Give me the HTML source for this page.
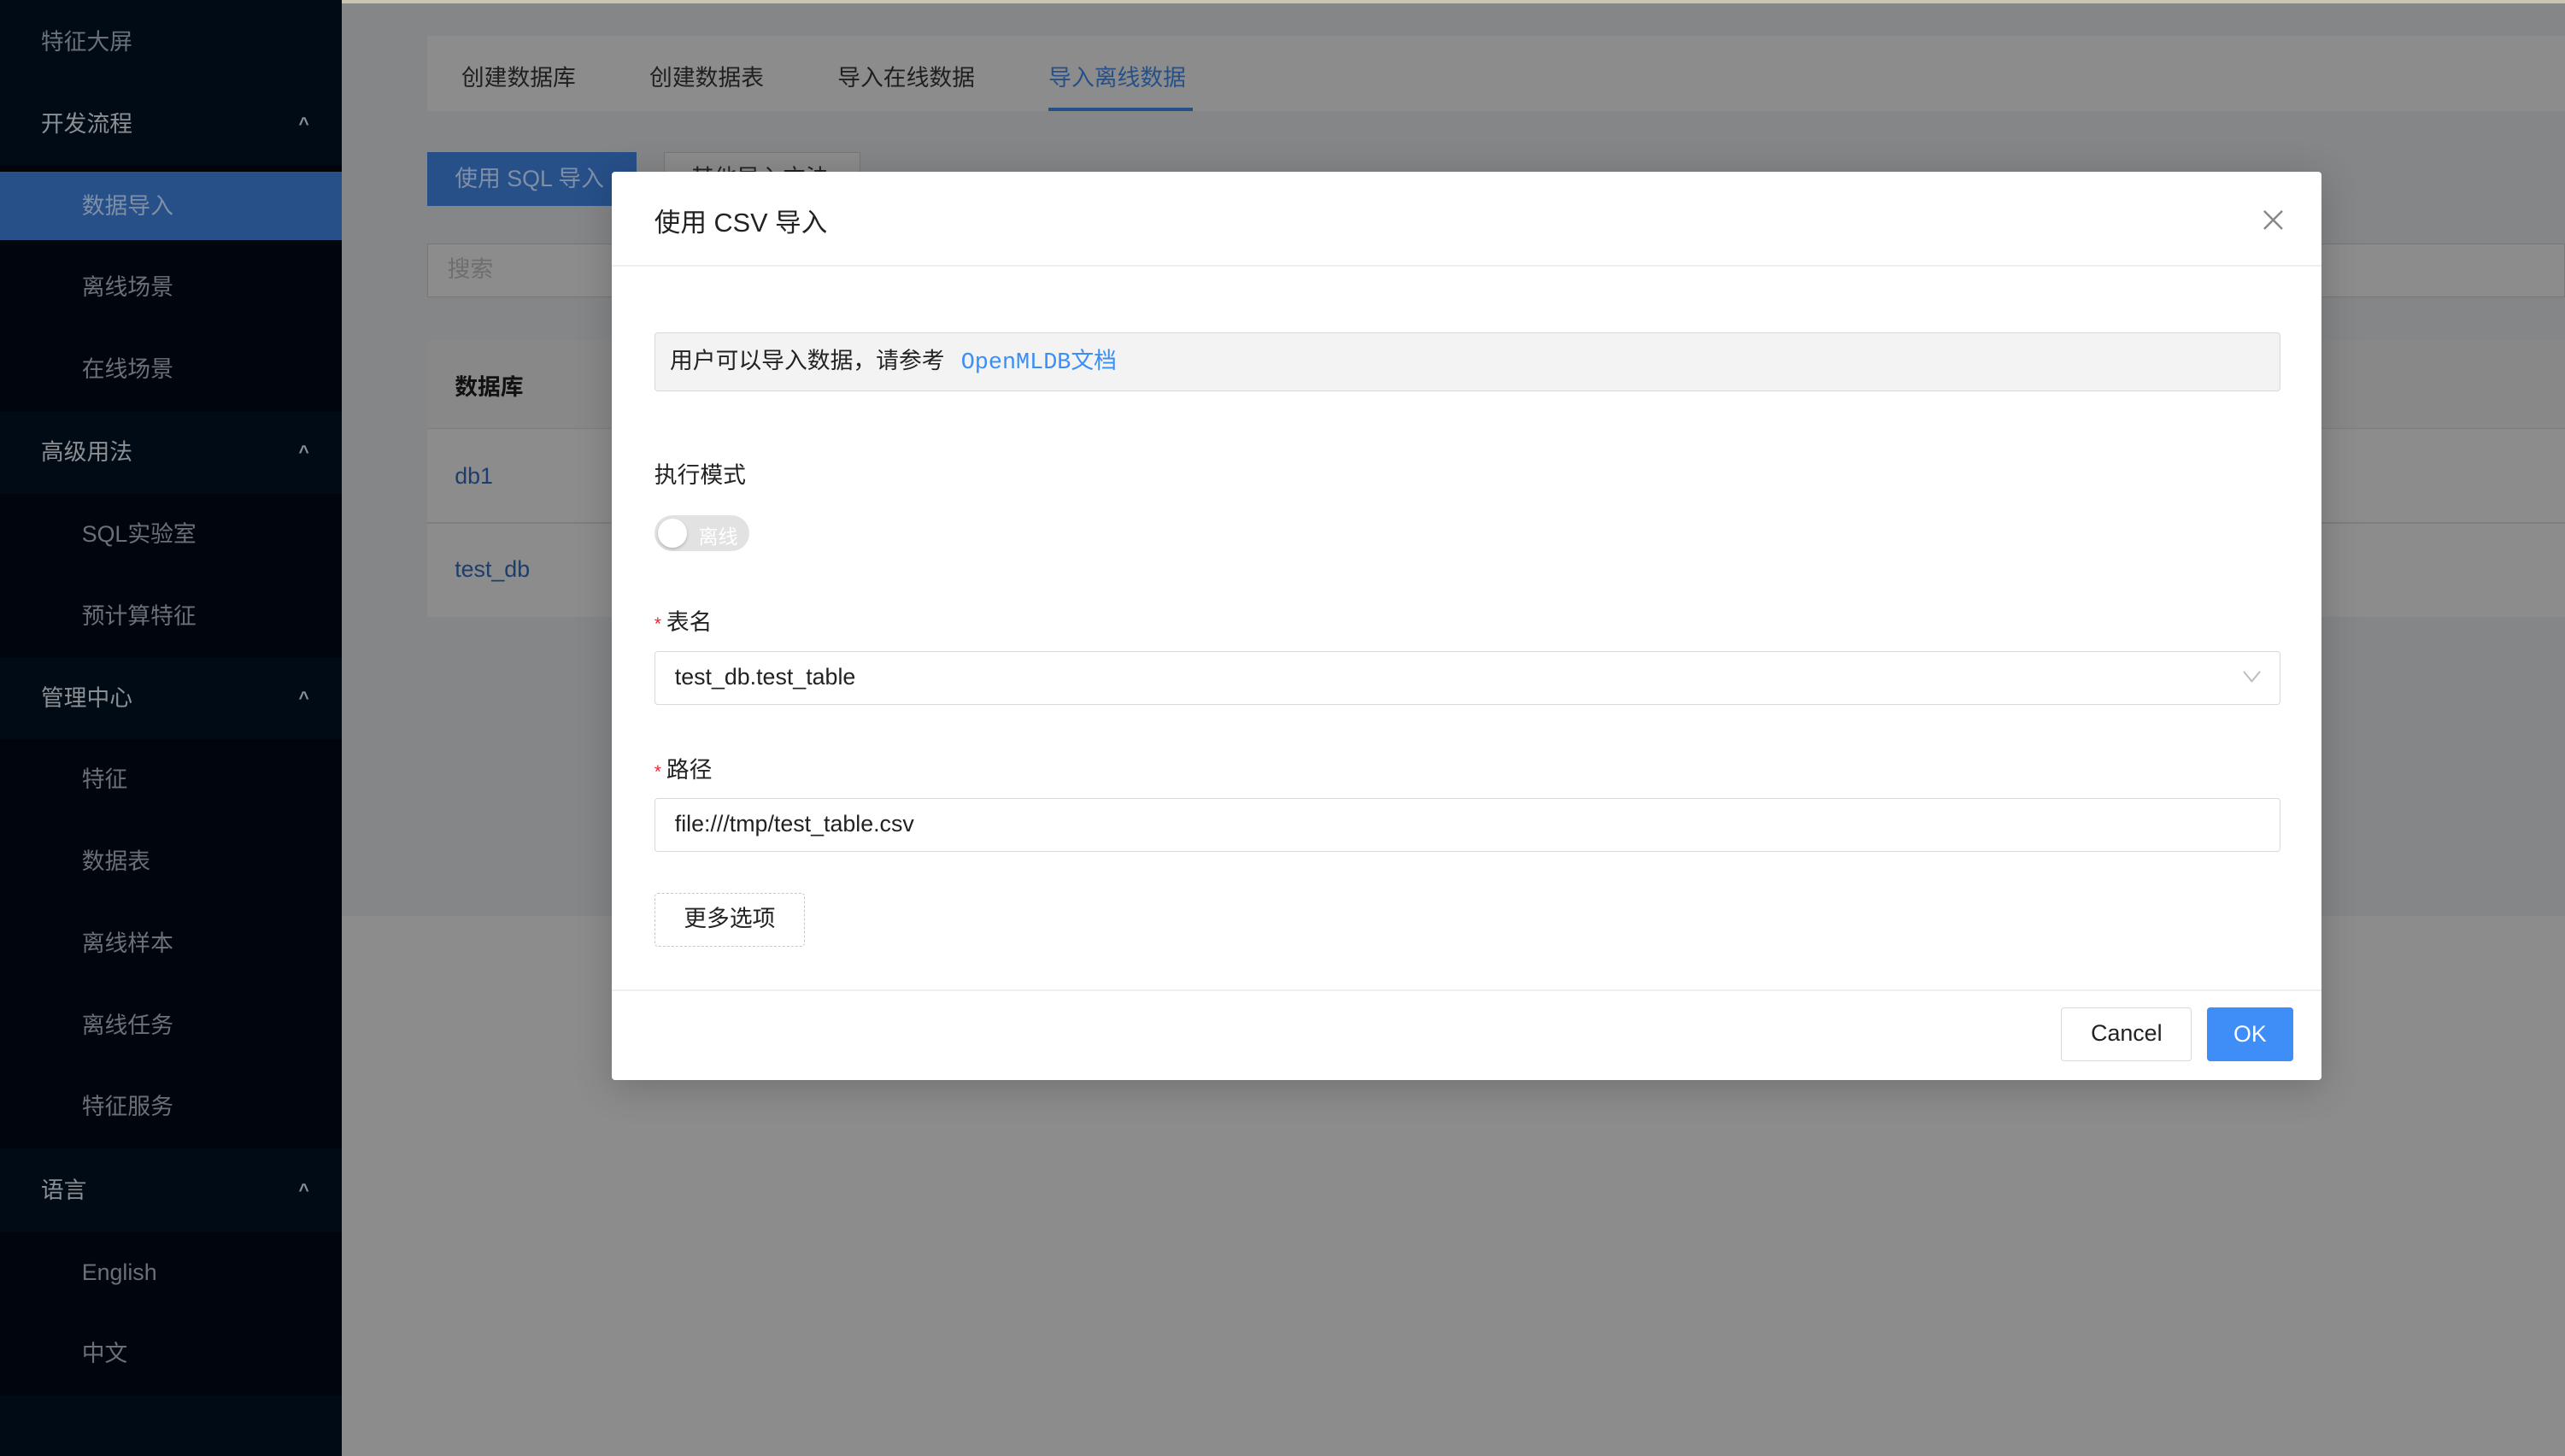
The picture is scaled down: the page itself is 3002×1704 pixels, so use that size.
<!DOCTYPE html>
<html><head><meta charset="utf-8"><style>
*{margin:0;padding:0;box-sizing:border-box}
html,body{width:3002px;height:1704px;overflow:hidden;background:#8c8c8c}
#root{zoom:1.9145;width:1568px;height:890px;position:relative;font-family:"Liberation Sans","Noto Sans CJK SC",sans-serif;font-size:14px}
.abs{position:absolute}
.side{left:0;top:0;width:209px;height:890px;background:#000b16}
.it{position:absolute;left:0;width:209px;height:50px;line-height:50px;color:#6b7077;font-size:14px}
.h{padding-left:25px;color:#8c8f93;background:#000b16}
.s{padding-left:50px;background:#00060c}
.car{position:absolute;right:20px;top:0;font-size:11px;font-weight:bold;color:#8c8f93}
</style></head><body><div id="root">
<div class="abs" style="left:0;top:0;width:1568px;height:2px;background:#c9c4b2"></div>
<div class="abs side">
<div class="it h" style="top:1px;color:#6b7077">特征大屏</div>
<div class="it h" style="top:51px">开发流程<span class="car">^</span></div>
<div class="abs" style="top:101px;left:0;width:209px;height:302px;background:#00060c"></div>
<div class="it" style="top:105px;height:42px;line-height:42px;padding-left:50px;background:#275089;color:#7e8fa6">数据导入</div>
<div class="it s" style="top:151px">离线场景</div>
<div class="it s" style="top:201px">在线场景</div>
<div class="it h" style="top:252px">高级用法<span class="car">^</span></div>
<div class="it s" style="top:302px">SQL实验室</div>
<div class="it s" style="top:352px">预计算特征</div>
<div class="it h" style="top:402px">管理中心<span class="car">^</span></div>
<div class="it s" style="top:452px">特征</div>
<div class="it s" style="top:502px">数据表</div>
<div class="it s" style="top:552px">离线样本</div>
<div class="it s" style="top:602px">离线任务</div>
<div class="it s" style="top:652px">特征服务</div>
<div class="it h" style="top:703px">语言<span class="car">^</span></div>
<div class="it s" style="top:753px">English</div>
<div class="it s" style="top:803px">中文</div>
</div>
<div class="abs" style="left:209px;top:2px;width:1359px;height:558px;background:#858688"></div>
<div class="abs" style="left:261px;top:22px;width:1307px;height:46px;background:#8c8c8c;font-size:14px;color:#1f1f1f">
<span class="abs" style="left:21px;top:14px">创建数据库</span>
<span class="abs" style="left:136px;top:14px">创建数据表</span>
<span class="abs" style="left:251px;top:14px">导入在线数据</span>
<span class="abs" style="left:380px;top:14px;color:#275089">导入离线数据</span>
<div class="abs" style="left:380px;top:44px;width:88px;height:2px;background:#275089"></div>
</div>
<div class="abs" style="left:261px;top:93px;width:128px;height:33px;background:#275089;color:#7e8fa6;line-height:33px;padding-left:17px;font-size:14px">使用 SQL 导入</div>
<div class="abs" style="left:406px;top:93px;width:120px;height:33px;border:1px solid #777;background:#8c8c8c;color:#222;line-height:31px;padding-left:16px">其他导入方法</div>
<div class="abs" style="left:261px;top:149px;width:1307px;height:33px;border:1px solid #777;background:#8c8c8c;color:#6e6e6e;line-height:31px;padding-left:12px">搜索</div>
<div class="abs" style="left:261px;top:208px;width:1307px;height:169px;background:#8c8c8c">
<div class="abs" style="left:0;top:0;width:1307px;height:54px;background:#888;border-bottom:1px solid #7e7e7e"></div>
<span class="abs" style="left:17px;top:17px;color:#111;font-weight:bold">数据库</span>
<div class="abs" style="left:0;top:111px;width:1307px;height:1px;background:#7e7e7e"></div>
<span class="abs" style="left:17px;top:75px;color:#1d3d6b">db1</span>
<span class="abs" style="left:17px;top:132px;color:#1d3d6b">test_db</span>
</div>
<div class="abs" style="left:374px;top:105px;width:1045px;height:555px;background:#fff;border-radius:2px;box-shadow:0 4px 24px rgba(0,0,0,.2)">
<div class="abs" style="left:26px;top:18px;font-size:16px;color:#222">使用 CSV 导入</div>
<svg class="abs" style="left:1009px;top:23px" width="13" height="13" viewBox="0 0 13 13"><path d="M1 1L12 12M12 1L1 12" stroke="#888" stroke-width="1.3"/></svg>
<div class="abs" style="left:0;top:57px;width:1045px;height:1px;background:#eee"></div>
<div class="abs" style="left:26px;top:98px;width:994px;height:36px;background:#f3f3f3;border:1px solid #d9d9d9;border-radius:2px;line-height:34px;padding-left:9px;color:#222">用户可以导入数据，请参考<span style="margin-left:10px;color:#3a8ef6;font-family:'Liberation Mono',monospace">OpenMLDB</span><span style="color:#3a8ef6">文档</span></div>
<div class="abs" style="left:26px;top:174px;color:#222">执行模式</div>
<div class="abs" style="left:26px;top:210px;width:58px;height:22px;border-radius:11px;background:#e2e2e2"><div class="abs" style="left:2px;top:2px;width:18px;height:18px;border-radius:9px;background:#fff;box-shadow:0 1px 2px rgba(0,0,0,.2)"></div><span class="abs" style="left:27px;top:3px;font-size:12px;color:#fff">离线</span></div>
<div class="abs" style="left:26px;top:264px;color:#222"><span style="color:#f5222d;font-size:11px">* </span>表名</div>
<div class="abs" style="left:26px;top:293px;width:994px;height:33px;border:1px solid #d9d9d9;border-radius:2px;line-height:31px;padding-left:12px;color:#222">test_db.test_table
<svg class="abs" style="right:11px;top:11px" width="12" height="8" viewBox="0 0 12 8"><path d="M1 1L6 7L11 1" stroke="#bbb" fill="none"/></svg></div>
<div class="abs" style="left:26px;top:354px;color:#222"><span style="color:#f5222d;font-size:11px">* </span>路径</div>
<div class="abs" style="left:26px;top:383px;width:994px;height:33px;border:1px solid #d9d9d9;border-radius:2px;line-height:31px;padding-left:12px;color:#222">file:///tmp/test_table.csv</div>
<div class="abs" style="left:26px;top:441px;width:92px;height:33px;border:1px dashed #c8c8c8;border-radius:2px;line-height:31px;text-align:center;color:#222">更多选项</div>
<div class="abs" style="left:0;top:500px;width:1045px;height:1px;background:#eee"></div>
<div class="abs" style="left:886px;top:511px;width:80px;height:33px;border:1px solid #d9d9d9;border-radius:2px;line-height:31px;text-align:center;color:#222">Cancel</div>
<div class="abs" style="left:975px;top:511px;width:53px;height:33px;background:#3f8ef7;border-radius:2px;line-height:33px;text-align:center;color:#fff">OK</div>
</div>
</div></body></html>
